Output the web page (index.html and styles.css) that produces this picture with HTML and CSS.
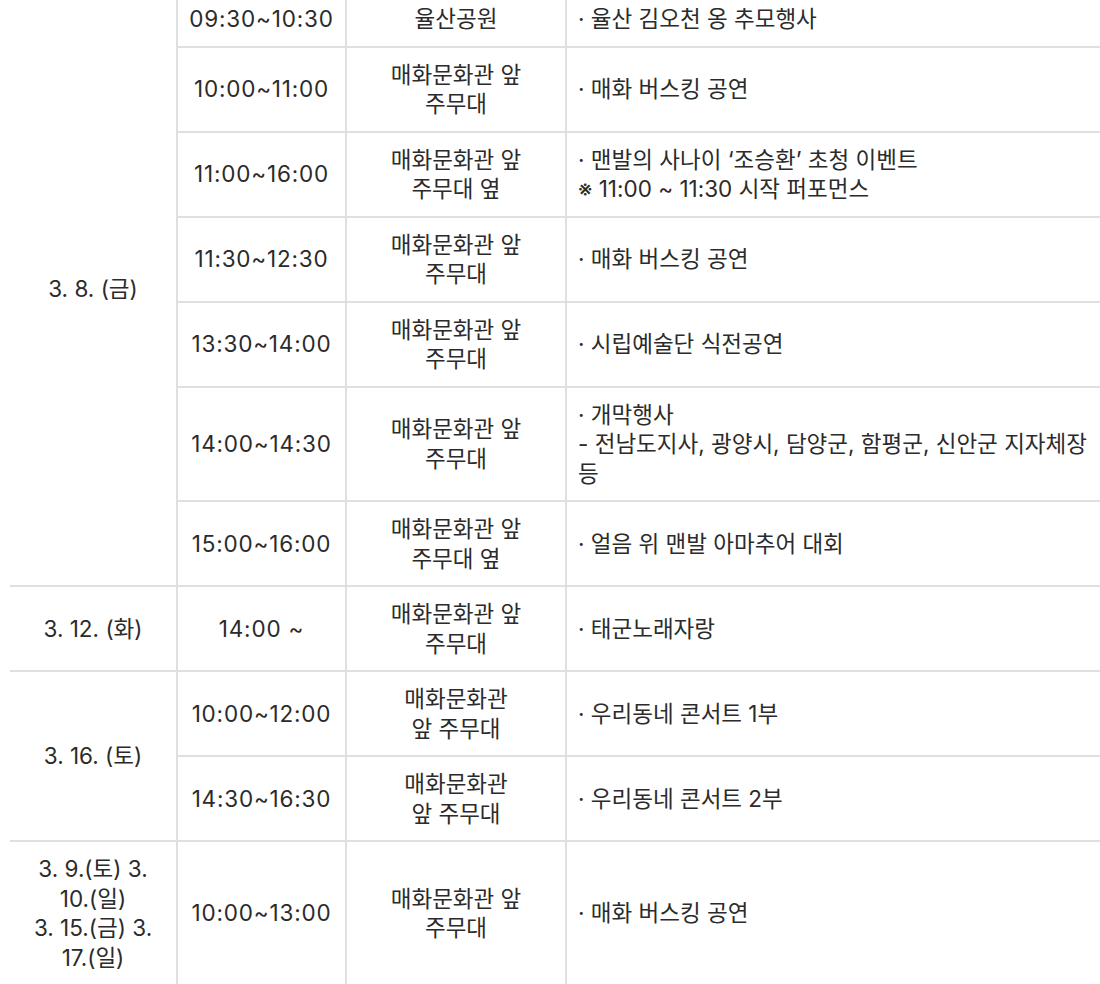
FILE: index.html
```html
<!DOCTYPE html>
<html lang="ko">
<head>
<meta charset="utf-8">
<title>행사 일정</title>
<link rel="stylesheet" href="styles.css">
</head>
<body>
<div class="wrap">
<table class="schedule">
  <colgroup>
    <col class="c-date">
    <col class="c-time">
    <col class="c-place">
    <col class="c-content">
  </colgroup>
  <tbody>
    <tr>
      <td class="date" rowspan="7">3. 8. (금)</td>
      <td class="time">09:30~10:30</td>
      <td class="place">율산공원</td>
      <td class="content">· 율산 김오천 옹 추모행사</td>
    </tr>
    <tr>
      <td class="time">10:00~11:00</td>
      <td class="place">매화문화관 앞<br>주무대</td>
      <td class="content">· 매화 버스킹 공연</td>
    </tr>
    <tr>
      <td class="time">11:00~16:00</td>
      <td class="place">매화문화관 앞<br>주무대 옆</td>
      <td class="content">· 맨발의 사나이 ‘조승환’ 초청 이벤트<br>※ 11:00 ~ 11:30 시작 퍼포먼스</td>
    </tr>
    <tr>
      <td class="time">11:30~12:30</td>
      <td class="place">매화문화관 앞<br>주무대</td>
      <td class="content">· 매화 버스킹 공연</td>
    </tr>
    <tr>
      <td class="time">13:30~14:00</td>
      <td class="place">매화문화관 앞<br>주무대</td>
      <td class="content">· 시립예술단 식전공연</td>
    </tr>
    <tr>
      <td class="time">14:00~14:30</td>
      <td class="place">매화문화관 앞<br>주무대</td>
      <td class="content">· 개막행사<br>- 전남도지사, 광양시, 담양군, 함평군, 신안군 지자체장 등</td>
    </tr>
    <tr>
      <td class="time">15:00~16:00</td>
      <td class="place">매화문화관 앞<br>주무대 옆</td>
      <td class="content">· 얼음 위 맨발 아마추어 대회</td>
    </tr>
    <tr>
      <td class="date">3. 12. (화)</td>
      <td class="time">14:00 ~</td>
      <td class="place">매화문화관 앞<br>주무대</td>
      <td class="content">· 태군노래자랑</td>
    </tr>
    <tr>
      <td class="date" rowspan="2">3. 16. (토)</td>
      <td class="time">10:00~12:00</td>
      <td class="place">매화문화관<br>앞 주무대</td>
      <td class="content">· 우리동네 콘서트 1부</td>
    </tr>
    <tr>
      <td class="time">14:30~16:30</td>
      <td class="place">매화문화관<br>앞 주무대</td>
      <td class="content">· 우리동네 콘서트 2부</td>
    </tr>
    <tr>
      <td class="date"><span class="nb">3. 9.(토)</span> 3. <span class="nb">10.(일)</span><br><span class="nb">3. 15.(금)</span> 3. <span class="nb">17.(일)</span></td>
      <td class="time">10:00~13:00</td>
      <td class="place">매화문화관 앞<br>주무대</td>
      <td class="content">· 매화 버스킹 공연</td>
    </tr>
  </tbody>
</table>
</div>
</body>
</html>
```

FILE: styles.css
```css
html, body {
  margin: 0;
  padding: 0;
  background: #fff;
  overflow: hidden;
}

.wrap {
  padding-left: 10px;
  margin-top: -8px;
}

.schedule {
  width: 1090px;
  border-collapse: separate;
  border-spacing: 0;
  table-layout: fixed;
  font-family: "Inter", "Noto Sans CJK KR", sans-serif;
  font-size: 22.5px;
  line-height: 29.5px;
  color: #2b2b2b;
}

.c-date { width: 166px; }
.c-time { width: 169px; }
.c-place { width: 220px; }
.c-content { width: 535px; }

.schedule td {
  padding: 12px 10px;
  border-bottom: 2px solid #e0e0e0;
  border-left: 2px solid #e0e0e0;
  vertical-align: middle;
  text-align: center;
  word-break: keep-all;
}

.schedule td.date {
  border-left: none;
}

.nb {
  white-space: nowrap;
}

.schedule td.time {
  letter-spacing: 0.8px;
}

.schedule td.content {
  text-align: left;
  padding-left: 11px;
  padding-right: 8px;
}
```
